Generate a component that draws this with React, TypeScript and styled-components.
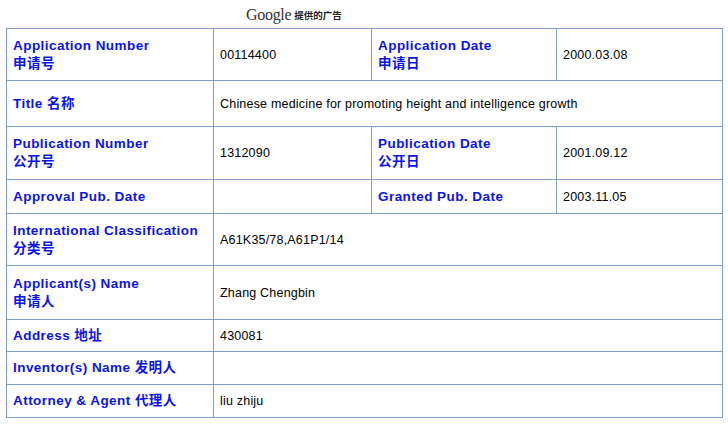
import React from "react";
import styled, { createGlobalStyle } from "styled-components";

const Global = createGlobalStyle`
  html, body { margin: 0; padding: 0; background: #ffffff; }
  body { font-family: "Liberation Sans", Arial, "Noto Sans CJK SC", sans-serif; }
`;

const Page = styled.div`
  width: 728px;
  height: 429px;
  padding: 0 0 0 6px;
  box-sizing: border-box;
`;

const AdBar = styled.div`
  height: 28px;
  display: flex;
  align-items: center;
  padding: 2px 0 0 240px;
  box-sizing: border-box;
  gap: 3px;
`;

const GoogleWord = styled.span`
  font-family: "Liberation Serif", "DejaVu Serif", serif;
  font-size: 16px;
  color: #333;
  letter-spacing: -0.3px;
`;

const AdText = styled.span`
  font-family: "Noto Sans CJK SC", sans-serif;
  font-size: 9.5px;
  font-weight: 700;
  color: #222;
`;

const Table = styled.table`
  border-collapse: collapse;
  width: 716px;
  table-layout: fixed;
`;

const Row = styled.tr<{ $h: number }>`
  height: ${(p) => p.$h}px;
`;

const Label = styled.td`
  border: 1px solid #7f9ccb;
  padding: 0 6px;
  vertical-align: middle;
  font-family: "Liberation Sans", Arial, "Noto Sans CJK SC", sans-serif;
  font-size: 13.5px;
  font-weight: 700;
  letter-spacing: 0.45px;
  line-height: 18px;
  color: #0a14e8;
`;

const Value = styled.td`
  border: 1px solid #7f9ccb;
  padding: 0 6px;
  vertical-align: middle;
  font-family: "Liberation Sans", Arial, sans-serif;
  font-size: 12.5px;
  letter-spacing: 0.2px;
  line-height: 16px;
  color: #000;
`;

export default function App() {
  return (
    <Page>
      <Global />
      <AdBar>
        <GoogleWord>Google</GoogleWord>
        <AdText>提供的广告</AdText>
      </AdBar>
      <Table>
        <colgroup>
          <col style={{ width: 207 }} />
          <col style={{ width: 158 }} />
          <col style={{ width: 185 }} />
          <col style={{ width: 166 }} />
        </colgroup>
        <tbody>
          <Row $h={52}>
            <Label>Application Number<br />申请号</Label>
            <Value>00114400</Value>
            <Label>Application Date<br />申请日</Label>
            <Value>2000.03.08</Value>
          </Row>
          <Row $h={46}>
            <Label>Title 名称</Label>
            <Value colSpan={3}>Chinese medicine for promoting height and intelligence growth</Value>
          </Row>
          <Row $h={53}>
            <Label>Publication Number<br />公开号</Label>
            <Value>1312090</Value>
            <Label>Publication Date<br />公开日</Label>
            <Value>2001.09.12</Value>
          </Row>
          <Row $h={34}>
            <Label>Approval Pub. Date</Label>
            <Value></Value>
            <Label>Granted Pub. Date</Label>
            <Value>2003.11.05</Value>
          </Row>
          <Row $h={52}>
            <Label>International Classification<br />分类号</Label>
            <Value colSpan={3}>A61K35/78,A61P1/14</Value>
          </Row>
          <Row $h={54}>
            <Label>Applicant(s) Name<br />申请人</Label>
            <Value colSpan={3}>Zhang Chengbin</Value>
          </Row>
          <Row $h={32}>
            <Label>Address 地址</Label>
            <Value colSpan={3}>430081</Value>
          </Row>
          <Row $h={33}>
            <Label>Inventor(s) Name 发明人</Label>
            <Value colSpan={3}></Value>
          </Row>
          <Row $h={33}>
            <Label>Attorney &amp; Agent 代理人</Label>
            <Value colSpan={3}>liu zhiju</Value>
          </Row>
        </tbody>
      </Table>
    </Page>
  );
}
